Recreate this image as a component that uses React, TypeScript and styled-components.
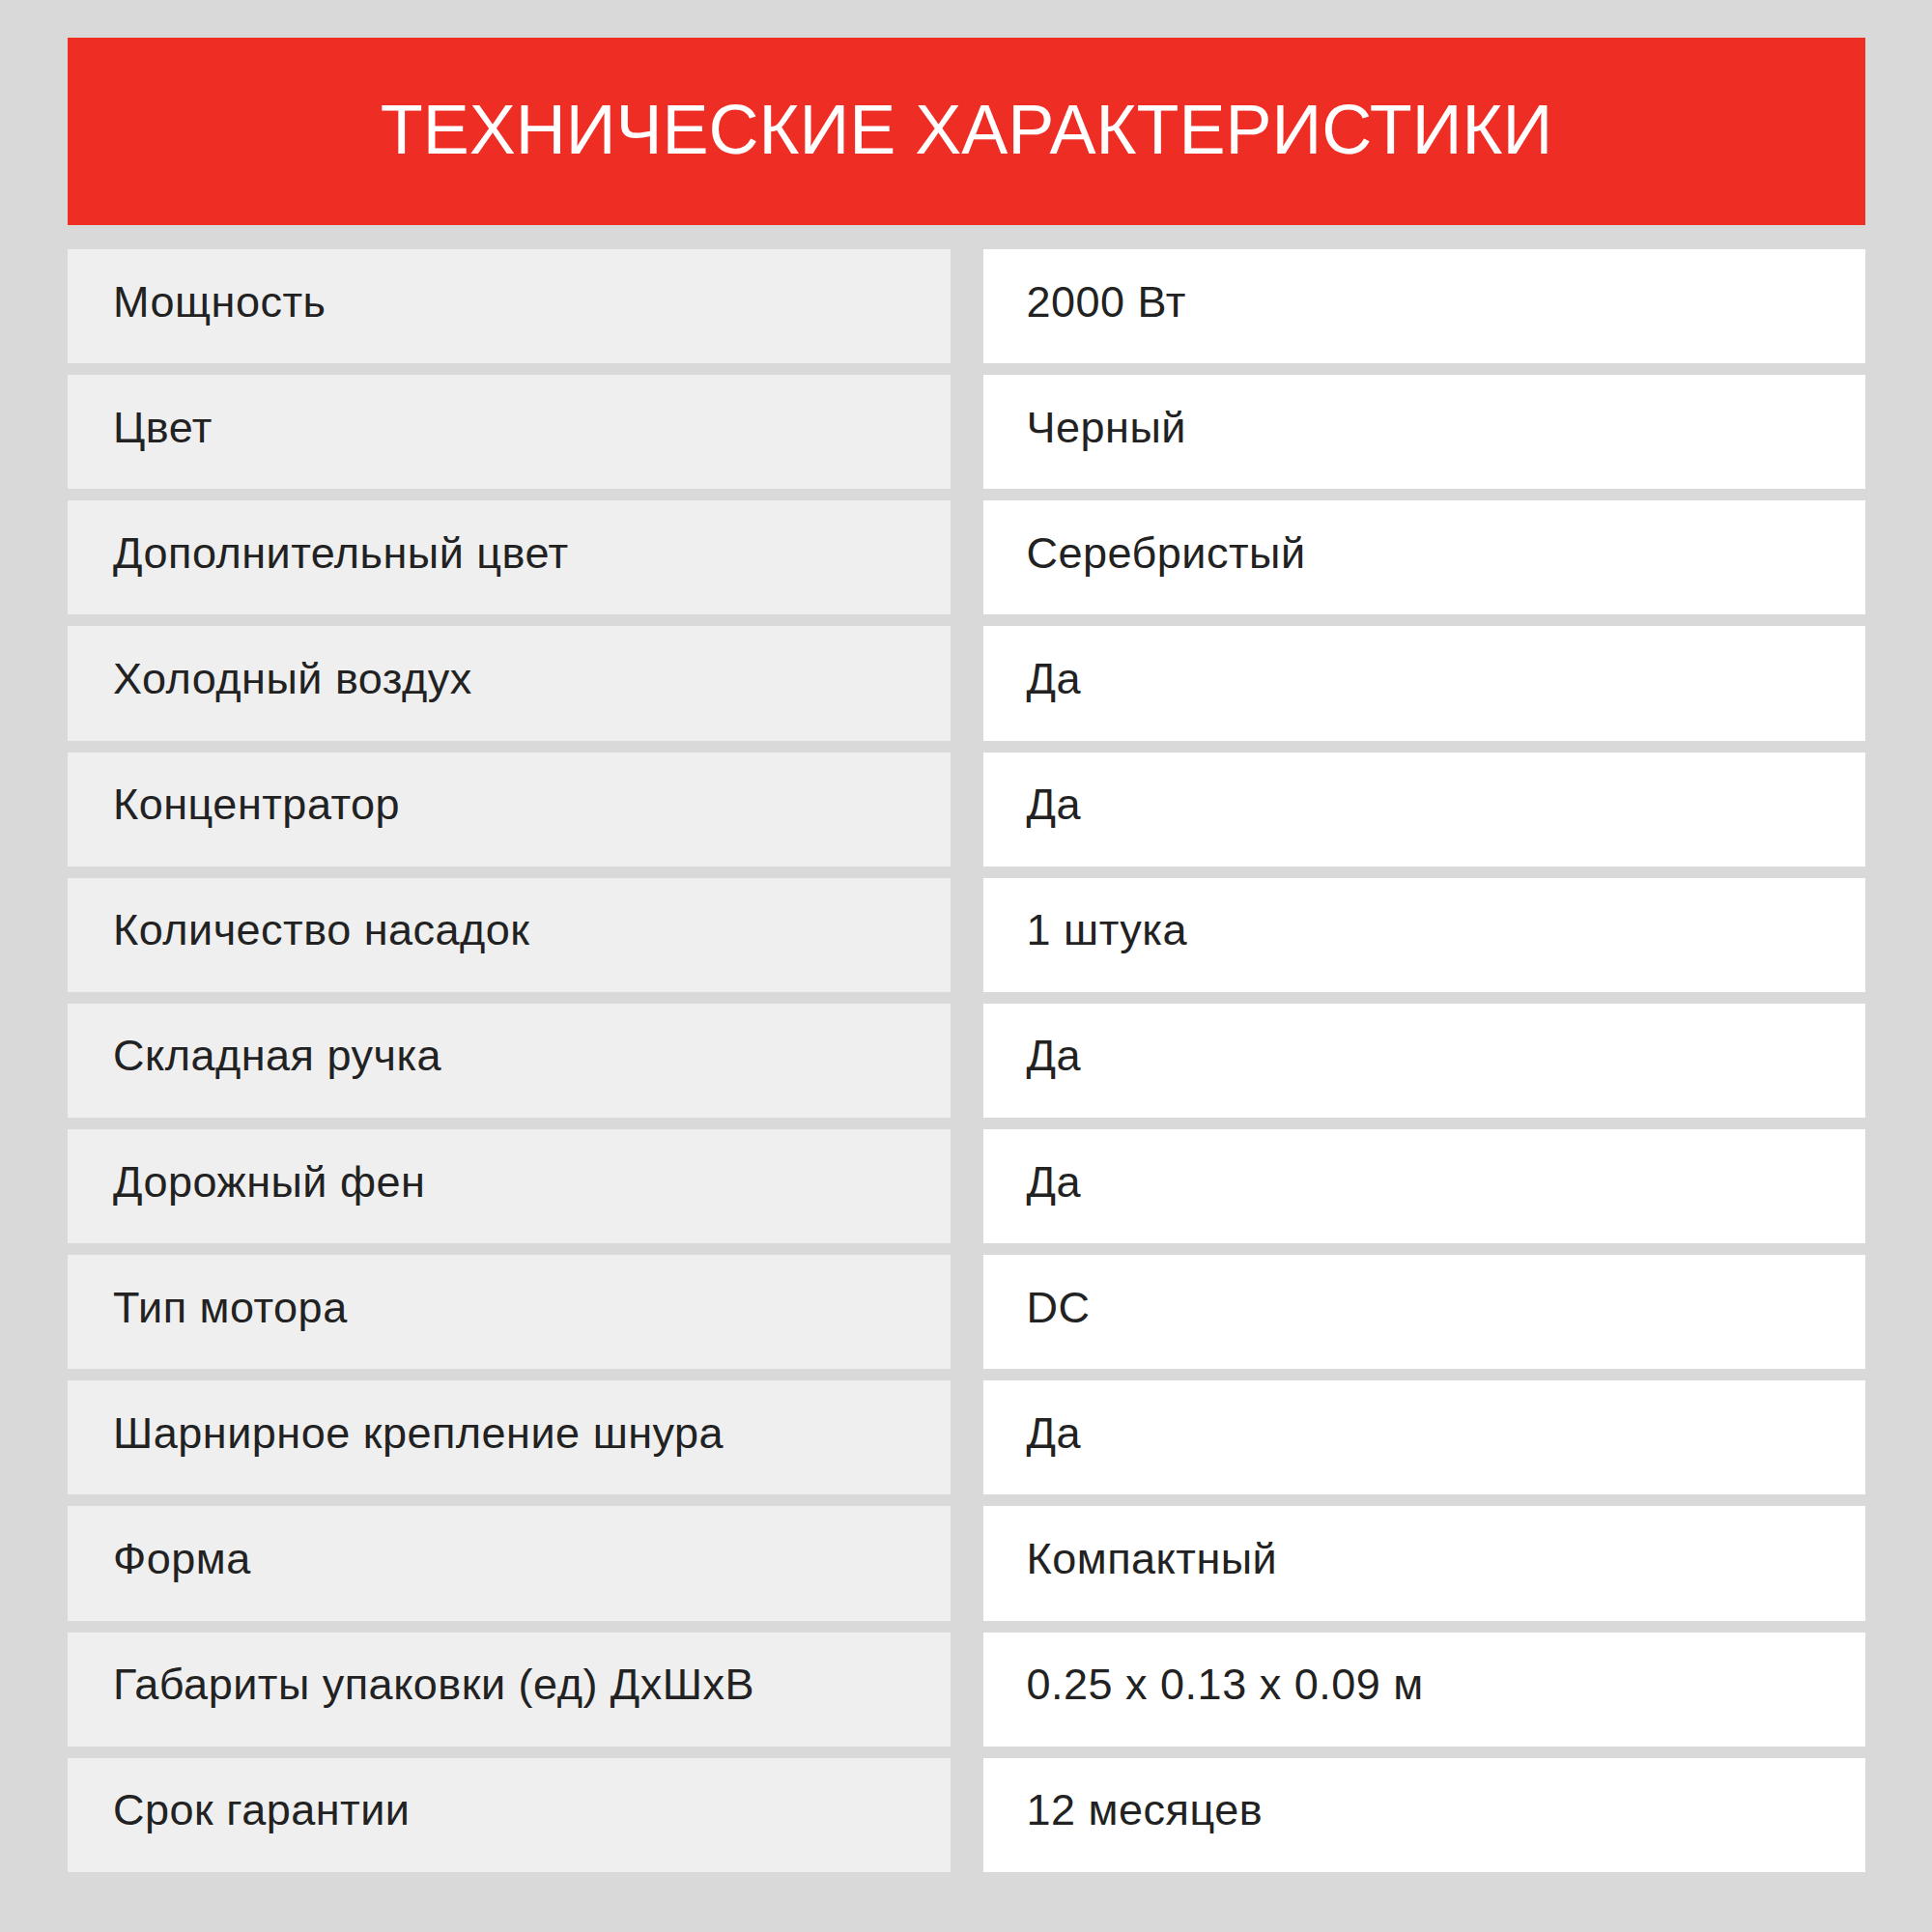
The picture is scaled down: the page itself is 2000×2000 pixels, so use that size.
import React from "react";
import styled, { createGlobalStyle } from "styled-components";

type Spec = {
  label: string;
  value: string;
};

const specs: Spec[] = [
  { label: "Мощность", value: "2000 Вт" },
  { label: "Цвет", value: "Черный" },
  { label: "Дополнительный цвет", value: "Серебристый" },
  { label: "Холодный воздух", value: "Да" },
  { label: "Концентратор", value: "Да" },
  { label: "Количество насадок", value: "1 штука" },
  { label: "Складная ручка", value: "Да" },
  { label: "Дорожный фен", value: "Да" },
  { label: "Тип мотора", value: "DC" },
  { label: "Шарнирное крепление шнура", value: "Да" },
  { label: "Форма", value: "Компактный" },
  { label: "Габариты упаковки (ед) ДхШхВ", value: "0.25 x 0.13 x 0.09 м" },
  { label: "Срок гарантии", value: "12 месяцев" },
];

const App: React.FC = () => {
  return (
    <>
      <GlobalStyle />
      <Page>
        <Banner>
          <BannerTitle>ТЕХНИЧЕСКИЕ ХАРАКТЕРИСТИКИ</BannerTitle>
        </Banner>
        <SpecGrid>
          {specs.map((spec) => (
            <React.Fragment key={spec.label}>
              <Cell $tone="label">{spec.label}</Cell>
              <Cell $tone="value">{spec.value}</Cell>
            </React.Fragment>
          ))}
        </SpecGrid>
      </Page>
    </>
  );
};

export default App;

const GlobalStyle = createGlobalStyle`
  html, body {
    margin: 0;
    padding: 0;
    background: #d9d9d9;
  }

  body {
    font-family: "Liberation Sans", Arial, sans-serif;
  }
`;

const Page = styled.div`
  width: 2000px;
  height: 2000px;
  box-sizing: border-box;
  padding: 39px 69px 0 70px;
  background: #d9d9d9;
  display: flex;
  flex-direction: column;
  gap: 25px;
`;

const Banner = styled.div`
  height: 194px;
  background: #ee2e25;
  display: flex;
  align-items: center;
  justify-content: center;
`;

const BannerTitle = styled.h1`
  margin: 0 0 4px;
  color: #ffffff;
  font-family: "Liberation Sans", Arial, sans-serif;
  font-weight: 400;
  font-size: 72px;
  line-height: 1;
  letter-spacing: 0;
`;

const SpecGrid = styled.div`
  display: grid;
  grid-template-columns: 1fr 1fr;
  grid-auto-rows: 118.15px;
  column-gap: 34px;
  row-gap: 12px;
`;

const Cell = styled.div<{ $tone: "label" | "value" }>`
  display: flex;
  align-items: center;
  box-sizing: border-box;
  padding: 0 40px 10px ${({ $tone }) => ($tone === "label" ? "47px" : "45px")};
  background: ${({ $tone }) => ($tone === "label" ? "#efefef" : "#ffffff")};
  color: #222222;
  font-size: 45px;
  line-height: 1;
  letter-spacing: 0.5px;
  white-space: nowrap;
`;
